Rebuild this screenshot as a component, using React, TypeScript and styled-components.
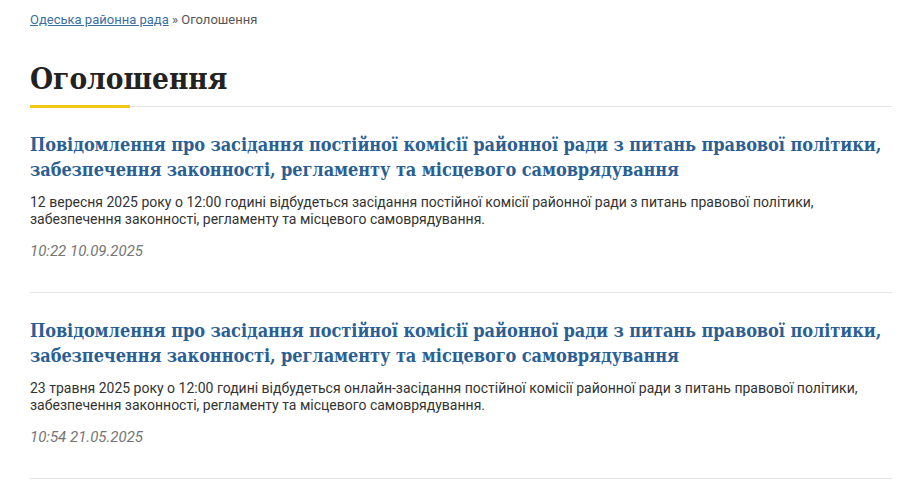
import styled, { createGlobalStyle } from 'styled-components';

const GlobalStyle = createGlobalStyle`
  html, body {
    margin: 0;
    padding: 0;
    background: #ffffff;
  }
`;

const SERIF = `'DejaVu Serif Condensed', 'DejaVu Serif', 'Liberation Serif', serif`;

const Page = styled('main')`
  box-sizing: border-box;
  padding: 11px 28px 0 30px;
  width: 920px;
  font-family: Roboto, 'Liberation Sans', sans-serif;
  color: #333333;
`;

const Breadcrumbs = styled('nav')`
  font-size: 13px;
  line-height: 18px;
  color: #555555;
`;

const CrumbLink = styled('a')`
  color: #3a6ea5;
  text-decoration: underline;
`;

const PageHeader = styled('header')`
  border-bottom: 1px solid #e6e6e6;
  margin-top: 30px;
  padding-bottom: 7px;
  position: relative;

  &::after {
    background: #f5c518;
    bottom: -2px;
    content: '';
    height: 3px;
    left: 0;
    position: absolute;
    width: 100px;
  }
`;

const Title = styled('h1')`
  font-family: ${ SERIF };
  font-stretch: condensed;
  font-size: 29.5px;
  font-weight: bold;
  line-height: 40px;
  margin: 0;
  color: #222222;
`;

const List = styled('ul')`
  list-style: none;
  margin: 0;
  padding: 0;
`;

const Item = styled('li')`
  border-bottom: 1px solid #e6e6e6;
  padding: 25px 0 31px;
`;

const ItemTitle = styled('a')`
  display: block;
  font-family: ${ SERIF };
  font-stretch: condensed;
  font-size: 18px;
  font-weight: bold;
  letter-spacing: -0.08px;
  line-height: 25px;
  color: #2b5f94;
  text-decoration: none;
`;

const Excerpt = styled('p')`
  font-size: 14px;
  line-height: 17px;
  margin: 12px 0 0;
  color: #333333;
`;

const Date = styled('div')`
  font-size: 15px;
  font-style: italic;
  line-height: 20px;
  margin-top: 13px;
  color: #757575;
`;

const NEWS = [
  {
    title: 'Повідомлення про засідання постійної комісії районної ради з питань правової політики, забезпечення законності, регламенту та місцевого самоврядування',
    excerpt: '12 вересня 2025 року о 12:00 годині відбудеться засідання постійної комісії районної ради з питань правової політики, забезпечення законності, регламенту та місцевого самоврядування.',
    date: '10:22 10.09.2025',
  },
  {
    title: 'Повідомлення про засідання постійної комісії районної ради з питань правової політики, забезпечення законності, регламенту та місцевого самоврядування',
    excerpt: '23 травня 2025 року о 12:00 годині відбудеться онлайн-засідання постійної комісії районної ради з питань правової політики, забезпечення законності, регламенту та місцевого самоврядування.',
    date: '10:54 21.05.2025',
  },
];

const App: React.FC = () => {
  return (
    <>
      <GlobalStyle />
      <Page>
        <Breadcrumbs>
          <CrumbLink href="#">Одеська районна рада</CrumbLink> » Оголошення
        </Breadcrumbs>
        <PageHeader>
          <Title>Оголошення</Title>
        </PageHeader>
        <List>
          {
            NEWS.map((item) =>
              <Item key={ item.date }>
                <ItemTitle href="#">{ item.title }</ItemTitle>
                <Excerpt>{ item.excerpt }</Excerpt>
                <Date>{ item.date }</Date>
              </Item>
            )
          }
        </List>
      </Page>
    </>
  );
};

export default App;
